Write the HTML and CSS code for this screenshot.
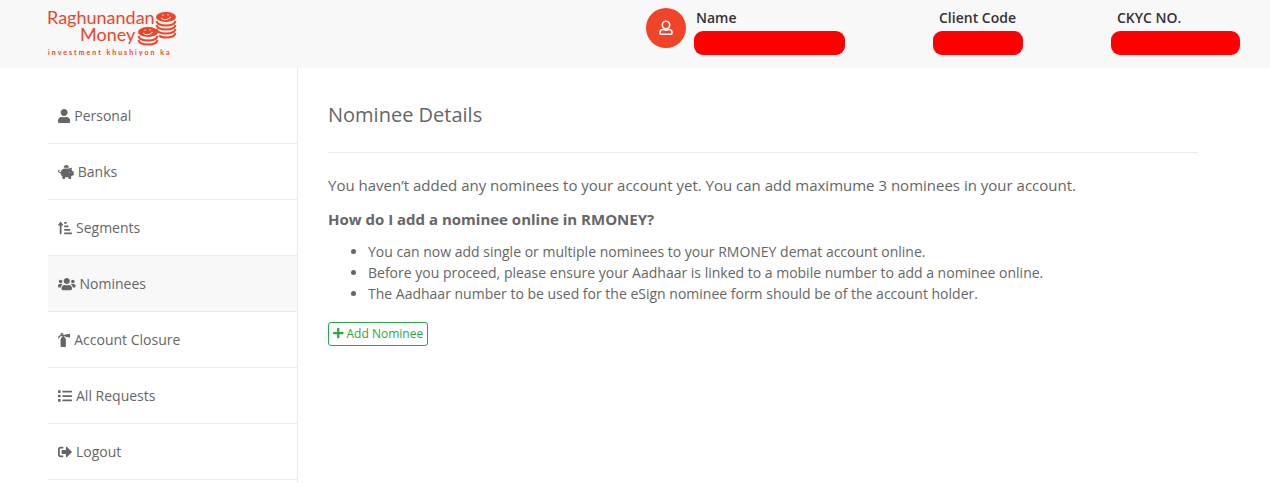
FILE: index.html
```html
<!DOCTYPE html>
<html lang="en">
<head>
  <meta charset="UTF-8" />
  <meta name="viewport" content="width=device-width, initial-scale=1.0"/>
  <title>Nominee Details</title>
  <link rel="stylesheet" href="styles.css">
</head>
<body>

  <!-- Header -->
  <header class="header">
    <a class="logo" href="#">
      <svg width="130" height="54" viewBox="0 0 130 54" fill="currentColor" role="img" aria-label="Raghunandan Money">
        <text class="logo-name" x="-1" y="20">Raghunandan</text>
        <text class="logo-name" x="32" y="37">Money</text>
        <text class="logo-tag" x="0" y="51">investment khushiyon ka</text>
        <ellipse cx="118" cy="13" rx="10" ry="5"/>
        <path class="coin-edge" d="M108.500 17q1 4.500 9.500 4.500t9.500-4.500M108.500 21q1 4.500 9.500 4.500t9.500-4.500M108.500 25q1 4.500 9.500 4.500t9.500-4.500M111 31.500q2 2 7 2 8.500 0 9.500-4.500"/>
        <ellipse cx="100" cy="28" rx="10" ry="5"/>
        <path class="coin-edge" d="M90.500 32q1 4.500 9.500 4.500t9.500-4.500M90.500 36q1 4.500 9.500 4.500t9.500-4.500"/>
        <path class="coin-face" d="M113 14q4 4 10-1M115 10.500v1.500M120 10v1.500M95 29q4 4 10-1M97 25.500v1.500M102 25v1.500"/>
      </svg>
    </a>
    <div class="client">
      <div class="client-user">
        <span class="avatar">
          <svg width="14" height="16" viewBox="0 0 14 16" fill="none" stroke="currentColor" stroke-width="1.6">
            <circle cx="7" cy="5" r="3.700"/>
            <path d="M4.500 9.500h-.5a3 3 0 0 0-3 3v.8c0 .5.3.9.8.9h10.400c.5 0 .8-.4.8-.9v-.8a3 3 0 0 0-3-3h-.5c-1.500.8-3.500.8-5 0z"/>
          </svg>
        </span>
        <div class="client-item name">
          <span class="client-label">Name</span>
          <span class="client-value"></span>
        </div>
      </div>
      <div class="client-item code">
        <span class="client-label">Client Code</span>
        <span class="client-value"></span>
      </div>
      <div class="client-item ckyc">
        <span class="client-label">CKYC NO.</span>
        <span class="client-value"></span>
      </div>
    </div>
  </header>

  <div class="layout">
    <!-- Side menu -->
    <nav class="sidebar">
      <a href="#">
        <svg class="icon" viewBox="0 0 448 512"><path d="M224 256c70.7 0 128-57.3 128-128S294.7 0 224 0 96 57.3 96 128s57.3 128 128 128zm89.6 32h-16.7c-22.2 10.2-46.9 16-72.9 16s-50.6-5.8-72.9-16h-16.7C60.2 288 0 348.2 0 422.4V464c0 26.5 21.5 48 48 48h352c26.5 0 48-21.5 48-48v-41.6c0-74.2-60.2-134.4-134.4-134.4z"/></svg>
        Personal
      </a>
      <a href="#">
        <svg class="icon" viewBox="0 0 576 512"><path d="M560 224h-29.500c-8.800-20-21.600-37.700-37.400-52.500L512 96h-32c-29.400 0-55.400 13.500-73 34.300-7.600-1.100-15.100-2.300-23-2.300H256c-77.400 0-141.900 55-156.800 128H56c-14.800 0-26.500-13.500-23.500-28.800C34.700 215.800 45.400 208 57 208h1c3.300 0 6-2.700 6-6v-20c0-3.300-2.700-6-6-6-28.500 0-53.900 20.400-57.500 48.600C-3.900 258.800 22.700 288 56 288h40c0 52.200 25.400 98.100 64 127.300V496c0 8.800 7.200 16 16 16h64c8.800 0 16-7.200 16-16v-48h128v48c0 8.800 7.200 16 16 16h64c8.800 0 16-7.200 16-16v-80.700c11.800-8.900 22.300-19.400 31.300-31.300H560c8.800 0 16-7.200 16-16V240c0-8.800-7.200-16-16-16zm-128 64c-8.800 0-16-7.200-16-16s7.200-16 16-16 16 7.200 16 16-7.200 16-16 16zM256 96h128c5.400 0 10.700.4 15.900.8 0-.3.100-.5.100-.8 0-53-43-96-96-96s-96 43-96 96c0 2.100.5 4.100.6 6.200 15.200-3.900 31-6.200 47.400-6.200z"/></svg>
        Banks
      </a>
      <a href="#">
        <svg class="icon" viewBox="0 0 512 512"><path d="M240 96h64a16 16 0 0 0 16-16V48a16 16 0 0 0-16-16h-64a16 16 0 0 0-16 16v32a16 16 0 0 0 16 16zm0 128h128a16 16 0 0 0 16-16v-32a16 16 0 0 0-16-16H240a16 16 0 0 0-16 16v32a16 16 0 0 0 16 16zm256 192H240a16 16 0 0 0-16 16v32a16 16 0 0 0 16 16h256a16 16 0 0 0 16-16v-32a16 16 0 0 0-16-16zm-256-64h192a16 16 0 0 0 16-16v-32a16 16 0 0 0-16-16H240a16 16 0 0 0-16 16v32a16 16 0 0 0 16 16zM16 160h48v304a16 16 0 0 0 16 16h32a16 16 0 0 0 16-16V160h48c14.200 0 21.400-17.200 11.300-27.300l-80-96a16 16 0 0 0-22.600 0l-80 96C-5.400 142.700 1.800 160 16 160z"/></svg>
        Segments
      </a>
      <a class="active" href="#">
        <svg class="icon" viewBox="0 0 640 512"><path d="M96 224c35.300 0 64-28.700 64-64s-28.700-64-64-64-64 28.700-64 64 28.700 64 64 64zm448 0c35.300 0 64-28.700 64-64s-28.700-64-64-64-64 28.700-64 64 28.700 64 64 64zm32 32h-64c-17.600 0-33.500 7.100-45.100 18.600 40.300 22.100 68.900 62 75.100 109.400h66c17.700 0 32-14.300 32-32v-32c0-35.300-28.700-64-64-64zm-256 0c61.900 0 112-50.100 112-112S381.900 32 320 32 208 82.100 208 144s50.100 112 112 112zm76.800 32h-8.300c-20.800 10-43.900 16-68.500 16s-47.600-6-68.500-16h-8.300C179.600 288 128 339.600 128 403.200V432c0 26.500 21.500 48 48 48h288c26.500 0 48-21.500 48-48v-28.800c0-63.600-51.600-115.200-115.200-115.200zm-223.700-13.400C161.500 263.100 145.600 256 128 256H64c-35.300 0-64 28.700-64 64v32c0 17.700 14.300 32 32 32h65.900c6.300-47.400 34.900-87.300 75.200-109.400z"/></svg>
        Nominees
      </a>
      <a href="#">
        <svg class="icon" viewBox="0 0 448 512"><path d="M434 26.300l-168 28C254.700 56.200 256 67.800 256 72h-58.300C208.400 36.100 181.400 0 144 0c-39.400 0-66.400 39.700-52.200 76.200-52.100 13.100-75.400 54.200-90.100 90.900-4.900 12.300 1.100 26.300 13.400 31.200 12.300 4.900 26.300-1.100 31.200-13.400C75.100 113 107 120 168 120v27.100c-41.500 10.800-72 49.200-72 94.100V488c0 13.300 10.700 24 24 24h144c13.300 0 24-10.700 24-24V240c0-44.700-30.600-82.300-72-93V120h40c0 3-1.700 15.700 10 17.700l168 28c7.300 1.200 14-4.500 14-11.900V38.200c0-7.400-6.700-13.100-14-11.900zM144 72c-8.800 0-16-7.200-16-16s7.200-16 16-16 16 7.200 16 16-7.200 16-16 16z"/></svg>
        Account Closure
      </a>
      <a href="#">
        <svg class="icon" viewBox="0 0 512 512"><path d="M80 368H16a16 16 0 0 0-16 16v64a16 16 0 0 0 16 16h64a16 16 0 0 0 16-16v-64a16 16 0 0 0-16-16zm0-320H16A16 16 0 0 0 0 64v64a16 16 0 0 0 16 16h64a16 16 0 0 0 16-16V64a16 16 0 0 0-16-16zm0 160H16a16 16 0 0 0-16 16v64a16 16 0 0 0 16 16h64a16 16 0 0 0 16-16v-64a16 16 0 0 0-16-16zm416 176H176a16 16 0 0 0-16 16v32a16 16 0 0 0 16 16h320a16 16 0 0 0 16-16v-32a16 16 0 0 0-16-16zm0-320H176a16 16 0 0 0-16 16v32a16 16 0 0 0 16 16h320a16 16 0 0 0 16-16V80a16 16 0 0 0-16-16zm0 160H176a16 16 0 0 0-16 16v32a16 16 0 0 0 16 16h320a16 16 0 0 0 16-16v-32a16 16 0 0 0-16-16z"/></svg>
        All Requests
      </a>
      <a href="#">
        <svg class="icon" viewBox="0 0 512 512"><path d="M497 273L329 441c-15 15-41 4.500-41-17v-96H152c-13.300 0-24-10.700-24-24v-96c0-13.300 10.700-24 24-24h136V88c0-21.400 25.900-32 41-17l168 168c9.300 9.400 9.300 24.600 0 34zM192 436v-40c0-6.600-5.400-12-12-12H96c-17.700 0-32-14.300-32-32V160c0-17.700 14.300-32 32-32h84c6.600 0 12-5.400 12-12V76c0-6.600-5.400-12-12-12H96c-53 0-96 43-96 96v192c0 53 43 96 96 96h84c6.600 0 12-5.400 12-12z"/></svg>
        Logout
      </a>
    </nav>

    <!-- Nominee details -->
    <main class="content">
      <h1>Nominee Details</h1>
      <p>You haven’t added any nominees to your account yet. You can add maximume 3 nominees in your account.</p>
      <h2>How do I add a nominee online in RMONEY?</h2>
      <ul>
        <li>You can now add single or multiple nominees to your RMONEY demat account online.</li>
        <li>Before you proceed, please ensure your Aadhaar is linked to a mobile number to add a nominee online.</li>
        <li>The Aadhaar number to be used for the eSign nominee form should be of the account holder.</li>
      </ul>
      <button class="add-button" type="button">
        <svg class="icon" viewBox="0 0 448 512"><path d="M416 208H272V64c0-17.700-14.300-32-32-32h-32c-17.700 0-32 14.300-32 32v144H32c-17.700 0-32 14.300-32 32v32c0 17.700 14.300 32 32 32h144v144c0 17.700 14.300 32 32 32h32c17.700 0 32-14.300 32-32V304h144c17.700 0 32-14.300 32-32v-32c0-17.700-14.300-32-32-32z"/></svg>
        Add Nominee
      </button>
    </main>
  </div>

</body>
</html>
```

FILE: styles.css
```css
:root {
  --brand: #ef4427;
  --panel: #f8f8f8;
  --line: #ebebeb;
  --text: #666;
  --text-dark: #333;
  --green: #28a745;
  --redact: #ff0000;
}
* {
  margin: 0; padding: 0; box-sizing: border-box;
}
body {
  min-height: 100vh; display: flex; flex-direction: column;
  background: #fff; color: var(--text);
  font-family: 'Open Sans', Arial, sans-serif; font-size: 14px; line-height: 21px;
}

.header {
  display: flex; justify-content: space-between; align-items: flex-start;
  min-height: 68px; padding: 4px 30px 8px 48px; background: var(--panel);
}
.logo { color: var(--brand); }
.logo svg { display: block; }
.logo-name { font-family: Lato, sans-serif; font-size: 18px; }
.logo-tag { font-family: Lato, sans-serif; font-size: 7px; font-weight: 700; letter-spacing: 2px; }
.coin-edge { fill: none; stroke: currentColor; stroke-width: 2; }
.coin-face { fill: none; stroke: var(--panel); }

.client { display: flex; gap: 88px; padding-top: 4px; }
.client-user { display: flex; gap: 8px; }
.avatar {
  display: flex; align-items: center; justify-content: center;
  width: 40px; height: 40px; margin-bottom: 8px; border-radius: 50%;
  background: var(--brand); color: #fff;
}
.client-label {
  display: block; padding-left: 6px; margin-bottom: 4px;
  color: var(--text-dark); font-weight: 600; line-height: 19px;
}
.name .client-label { padding-left: 2px; }
.client-value {
  display: block; height: 24px; border-radius: 9px; background: var(--redact);
}
.name .client-value { width: 151px; }
.code .client-value { width: 90px; }
.ckyc .client-value { width: 129px; }

.layout { display: flex; flex: 1; padding: 0 48px; }
.sidebar {
  width: 250px; padding-top: 20px; border-right: 1px solid var(--line);
}
.sidebar a {
  display: flex; align-items: center; gap: 4px;
  height: 56px; padding: 0 10px; border-bottom: 1px solid var(--line);
  color: var(--text); text-decoration: none;
}
.sidebar a:hover, .sidebar .active { background: var(--panel); }
.icon { height: 14px; fill: currentColor; }

.content { flex: 1; padding: 32px 24px 0 30px; }
.content h1 {
  margin-bottom: 21px; padding-bottom: 22px; border-bottom: 1px solid var(--line);
  font-size: 20px; font-weight: 400; line-height: 30px;
}
.content p { margin-bottom: 12px; font-size: 15px; line-height: 22px; }
.content h2 { margin-bottom: 11px; font-size: 15px; font-weight: 700; line-height: 22px; }
.content ul { margin-bottom: 18px; padding-left: 40px; }

.add-button {
  display: flex; align-items: center; gap: 3px;
  height: 24px; padding: 0 4px 2px;
  border: 1px solid var(--green); border-radius: 3px;
  background: #fff; color: var(--green);
  font-family: inherit; font-size: 12px; cursor: pointer;
}
.add-button:hover { background: var(--green); color: #fff; }
.add-button .icon { height: 12px; }
```
